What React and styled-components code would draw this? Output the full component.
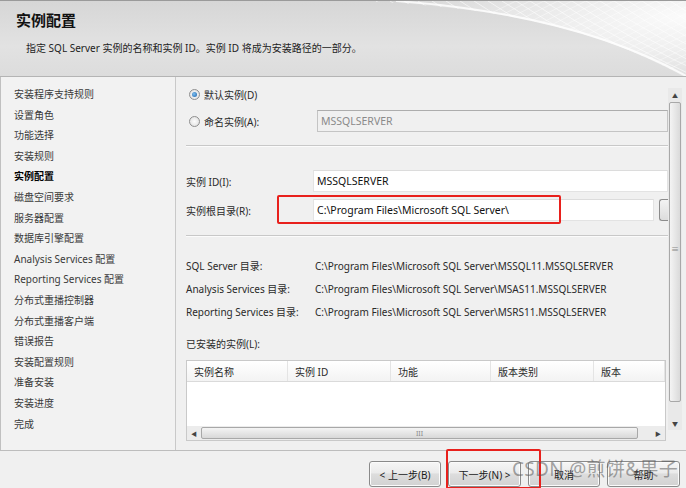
import React from "react";
import styled, { createGlobalStyle } from "styled-components";

const Global = createGlobalStyle`
  html, body { margin: 0; padding: 0; background: #f0f0f0; }
  body { font-family: "Noto Sans", "Noto Sans CJK SC", sans-serif; }
  * { box-sizing: border-box; }
`;

const Window = styled.div`
  width: 686px;
  height: 488px;
  display: flex;
  flex-direction: column;
  background: #f0f0f0;
  overflow: hidden;
  position: relative;
  font-family: "Noto Sans", "Noto Sans CJK SC", sans-serif;
  color: #2a2a2a;
`;

const Header = styled.div`
  position: relative;
  height: 77px;
  flex: none;
  background: linear-gradient(180deg, #d6d6d6 0%, #e2e2e2 60%, #dcdcdc 100%);
  border-bottom: 1px solid #b4b4b4;
  border-top: 1px solid #9a9a9a;
  padding: 7px 0 0 16px;
  overflow: hidden;
`;

const Swirl = styled.svg`
  position: absolute;
  right: 0;
  top: 0;
  width: 330px;
  height: 77px;
`;

const Title = styled.h1`
  position: relative;
  margin: 0;
  font-family: "Noto Sans CJK SC", sans-serif;
  font-size: 15px;
  font-weight: 700;
  color: #111;
  line-height: 24px;
`;

const Subtitle = styled.p`
  position: relative;
  margin: 9px 0 0 10px;
  font-size: 10px;
  line-height: 14px;
  color: #222;
  font-family: "Noto Sans", "Noto Sans CJK SC", sans-serif;
`;

const Body = styled.div`
  flex: none;
  height: 374px;
  display: flex;
  border-bottom: 1px solid #bdbdbd;
`;

const Nav = styled.ul`
  list-style: none;
  margin: 0;
  padding: 7px 0 0 13px;
  width: 176px;
  flex: none;
  border-right: 1px solid #c9c9c9;
  border-left: 1px solid #c0c0c0;
  background: #f2f2f2;
`;

const NavItem = styled.li`
  height: 20.6px;
  line-height: 20.6px;
  font-size: 10px;
  white-space: nowrap;
  color: ${(p) => (p.$active ? "#000" : "#3a3a3a")};
  font-weight: ${(p) => (p.$active ? 700 : 400)};
  font-family: "Noto Sans", "Noto Sans CJK SC", sans-serif;
`;

const Content = styled.div`
  flex: 1;
  display: flex;
  min-width: 0;
`;

const Main = styled.div`
  flex: 1;
  min-width: 0;
  padding: 7px 0 0 10px;
  display: flex;
  flex-direction: column;
`;

const VScroll = styled.div`
  width: 14px;
  flex: none;
  margin: 11px 4px 20px 0;
  display: flex;
  flex-direction: column;
  align-items: center;
  background: #e9e9e9;
`;

const Arrow = styled.div`
  height: 14px;
  width: 100%;
  display: flex;
  align-items: center;
  justify-content: center;
  font-size: 6px;
  color: #444;
  flex: none;
`;

const Thumb = styled.div`
  flex: none;
  width: 12px;
  height: 300px;
  border: 1px solid #a8a8a8;
  border-radius: 2px;
  background: linear-gradient(90deg, #f4f4f4, #dadada);
  display: flex;
  align-items: flex-start;
  padding-top: 140px;
  justify-content: center;
  font-size: 8px;
  color: #888;
`;

const Spacer = styled.div`
  flex: 1;
`;

const Row = styled.div`
  display: flex;
  align-items: center;
  height: ${(p) => p.$h || 22}px;
  margin-top: ${(p) => p.$mt || 0}px;
  position: relative;
`;

const Radio = styled.span`
  width: 11px;
  height: 11px;
  border-radius: 50%;
  border: 1px solid #8f8f8f;
  background: radial-gradient(circle, #fdfdfd 0%, #dcdcdc 100%);
  display: inline-flex;
  align-items: center;
  justify-content: center;
  margin: 0 4px 0 3px;
  flex: none;
  &::after {
    content: "";
    width: 5px;
    height: 5px;
    border-radius: 50%;
    background: ${(p) => (p.$checked ? "radial-gradient(circle at 40% 40%, #7ec0f0, #1a5fa8)" : "transparent")};
  }
`;

const Label = styled.span`
  font-size: 10px;
  color: #2a2a2a;
  width: ${(p) => (p.$w ? p.$w + "px" : "auto")};
  flex: none;
  white-space: nowrap;
  font-family: "Noto Sans", "Noto Sans CJK SC", sans-serif;
`;

const Input = styled.div`
  height: 22px;
  flex: ${(p) => (p.$grow ? 1 : "none")};
  border: 1px solid ${(p) => (p.$disabled ? "#c4c4c4" : "#e3e3e3")};
  border-top-color: ${(p) => (p.$disabled ? "#adadad" : "#dcdcdc")};
  background: ${(p) => (p.$disabled ? "#f0f0f0" : "#fff")};
  color: ${(p) => (p.$disabled ? "#8a8a8a" : "#111")};
  font-size: 10.5px;
  padding-left: 3px;
  display: flex;
  align-items: center;
  white-space: nowrap;
  font-family: "Noto Sans", sans-serif;
`;

const Browse = styled.div`
  width: 9px;
  height: 22px;
  margin-left: 5px;
  border: 1px solid #8c8c8c;
  border-right: none;
  border-radius: 3px 0 0 3px;
  background: linear-gradient(#f3f3f3, #dcdcdc);
  flex: none;
`;

const Separator = styled.div`
  height: 1px;
  background: #c8c8c8;
  border-bottom: 1px solid #fbfbfb;
  margin-top: ${(p) => p.$mt}px;
  margin-bottom: ${(p) => p.$mb}px;
  box-sizing: content-box;
`;

const RedBox = styled.div`
  position: absolute;
  border: 2px solid #e8201c;
  border-radius: 2px;
  pointer-events: none;
`;

const DirRow = styled.div`
  display: flex;
  align-items: center;
  height: 23px;
  font-size: 10px;
`;

const DirValue = styled.span`
  font-size: 10px;
  color: #2a2a2a;
  white-space: nowrap;
  margin-left: 2px;
`;

const Table = styled.div`
  margin-top: 7px;
  margin-right: 2px;
  height: 81px;
  border: 1px solid #c9c9c9;
  background: #fff;
  display: flex;
  flex-direction: column;
`;

const THead = styled.div`
  display: grid;
  grid-template-columns: 101px 103px 100px 103px 1fr;
  height: 21px;
  border-bottom: 1px solid #dadada;
  background: linear-gradient(#ffffff, #f3f3f3);
  flex: none;
`;

const TH = styled.div`
  font-size: 10px;
  padding-left: 7px;
  display: flex;
  align-items: center;
  border-right: 1px solid #e4e4e4;
  color: #2a2a2a;
  white-space: nowrap;
`;

const HScroll = styled.div`
  margin-top: auto;
  height: 14px;
  display: flex;
  align-items: center;
  background: #ececec;
  flex: none;
`;

const HArrow = styled.div`
  width: 14px;
  text-align: center;
  font-size: 6px;
  color: #444;
  flex: none;
`;

const HThumb = styled.div`
  width: 437px;
  height: 12px;
  border: 1px solid #a8a8a8;
  border-radius: 2px;
  background: linear-gradient(#f4f4f4, #d8d8d8);
  display: flex;
  align-items: center;
  justify-content: center;
  font-size: 7px;
  color: #888;
  flex: none;
`;

const Footer = styled.div`
  flex: 1;
  display: flex;
  justify-content: flex-end;
  align-items: flex-start;
  gap: 7px;
  padding: 10px 6px 0 0;
  position: relative;
`;

const Button = styled.button`
  width: ${(p) => p.$w || 72}px;
  height: 26px;
  border: 1px solid #8a8a8a;
  border-radius: 3px;
  background: linear-gradient(#f6f6f6 0%, #ebebeb 45%, #dddddd 50%, #d2d2d2 100%);
  box-shadow: inset 0 0 0 1px #fbfbfb;
  font-size: 10px;
  color: #1a1a1a;
  font-family: "Noto Sans", "Noto Sans CJK SC", sans-serif;
  padding: 0;
`;

const Watermark = styled.div`
  position: absolute;
  right: 8px;
  top: 3px;
  font-size: 19px;
  color: rgba(90, 90, 90, 0.55);
  font-family: "Noto Sans", "Noto Sans CJK SC", sans-serif;
  letter-spacing: 0.3px;
  pointer-events: none;
  white-space: nowrap;
`;

const navItems = [
  "安装程序支持规则",
  "设置角色",
  "功能选择",
  "安装规则",
  "实例配置",
  "磁盘空间要求",
  "服务器配置",
  "数据库引擎配置",
  "Analysis Services 配置",
  "Reporting Services 配置",
  "分布式重播控制器",
  "分布式重播客户端",
  "错误报告",
  "安装配置规则",
  "准备安装",
  "安装进度",
  "完成",
];

const dirs = [
  ["SQL Server 目录:", "C:\\Program Files\\Microsoft SQL Server\\MSSQL11.MSSQLSERVER"],
  ["Analysis  Services 目录:", "C:\\Program Files\\Microsoft SQL Server\\MSAS11.MSSQLSERVER"],
  ["Reporting Services 目录:", "C:\\Program Files\\Microsoft SQL Server\\MSRS11.MSSQLSERVER"],
];

const cols = ["实例名称", "实例 ID", "功能", "版本类别", "版本"];

function SwirlArt() {
  const lines = [];
  for (let i = 0; i < 22; i++) {
    const x = 20 + i * 14;
    lines.push(
      <path key={"a" + i} d={`M${x} 0 Q ${x + 60} 40 ${x + 140} 77`} stroke="#fff" strokeWidth="0.8" fill="none" opacity="0.7" />
    );
    lines.push(
      <path key={"b" + i} d={`M${x + 140} 0 Q ${x + 60} 40 ${x - 20} 77`} stroke="#fff" strokeWidth="0.8" fill="none" opacity="0.5" />
    );
  }
  return (
    <Swirl viewBox="0 0 330 77" preserveAspectRatio="none">
      <defs>
        <radialGradient id="g" cx="1" cy="0.2" r="0.9">
          <stop offset="0" stopColor="#ffffff" stopOpacity="0.9" />
          <stop offset="1" stopColor="#ffffff" stopOpacity="0" />
        </radialGradient>
        <clipPath id="c">
          <path d="M0 0 C 120 5, 230 20, 330 77 L330 0 Z" />
        </clipPath>
      </defs>
      <path d="M0 0 C 120 5, 230 20, 330 77 L330 0 Z" fill="url(#g)" />
      <g clipPath="url(#c)">{lines}</g>
      <path d="M40 0 C 150 8, 250 30, 330 75" stroke="#fff" strokeWidth="2" fill="none" opacity="0.8" />
    </Swirl>
  );
}

export default function App() {
  return (
    <>
      <Global />
      <Window>
        <Header>
          <SwirlArt />
          <Title>实例配置</Title>
          <Subtitle>指定 SQL Server 实例的名称和实例 ID。实例 ID 将成为安装路径的一部分。</Subtitle>
        </Header>
        <Body>
          <Nav>
            {navItems.map((n) => (
              <NavItem key={n} $active={n === "实例配置"}>
                {n}
              </NavItem>
            ))}
          </Nav>
          <Content>
            <Main>
              <Row $h={20}>
                <Radio $checked />
                <Label>默认实例(D)</Label>
              </Row>
              <Row $mt={6}>
                <Radio />
                <Label $w={113}>命名实例(A):</Label>
                <Input $grow $disabled>MSSQLSERVER</Input>
              </Row>
              <Separator $mt={13} $mb={23} />
              <Row>
                <Label $w={127}>实例 ID(I):</Label>
                <Input $grow>MSSQLSERVER</Input>
              </Row>
              <Row $mt={7}>
                <Label $w={127}>实例根目录(R):</Label>
                <Input $grow>C:\Program Files\Microsoft SQL Server\</Input>
                <Browse />
                <RedBox style={{ left: 91, top: -4, width: 284, height: 29 }} />
              </Row>
              <Separator $mt={14} $mb={17} />
              {dirs.map(([k, v]) => (
                <DirRow key={k}>
                  <Label $w={127}>{k}</Label>
                  <DirValue>{v}</DirValue>
                </DirRow>
              ))}
              <Row $mt={10} $h={20}>
                <Label>已安装的实例(L):</Label>
              </Row>
              <Table>
                <THead>
                  {cols.map((c) => (
                    <TH key={c}>{c}</TH>
                  ))}
                </THead>
                <HScroll>
                  <HArrow>◀</HArrow>
                  <HThumb>III</HThumb>
                  <Spacer />
                  <HArrow>▶</HArrow>
                </HScroll>
              </Table>
            </Main>
            <VScroll>
              <Arrow>▲</Arrow>
              <Thumb>≡</Thumb>
              <Spacer />
              <Arrow>▼</Arrow>
            </VScroll>
          </Content>
        </Body>
        <Footer>
          <Button>&lt; 上一步(B)</Button>
          <Button $w={73}>下一步(N) &gt;</Button>
          <Button>取消</Button>
          <Button $w={73}>帮助</Button>
          <RedBox style={{ left: 446, top: -2, width: 95, height: 40 }} />
          <Watermark>CSDN @煎饼&amp;果子</Watermark>
        </Footer>
      </Window>
    </>
  );
}
